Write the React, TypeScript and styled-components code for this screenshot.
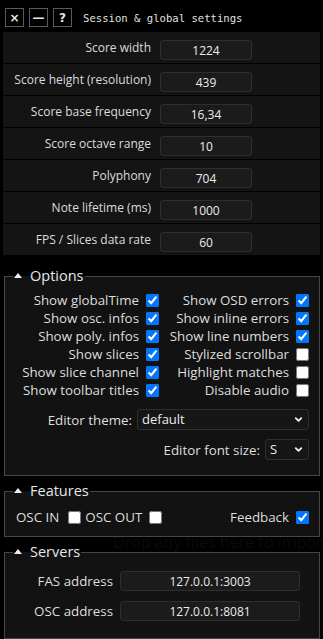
import React from 'react';
import styled, { createGlobalStyle } from 'styled-components';
import { ChevronDown } from 'lucide-react';

const GlobalStyle = createGlobalStyle`
  html, body {
    margin: 0;
    padding: 0;
    background: #000;
  }
  body {
    font-family: "Open Sans", "Noto Sans", sans-serif;
    color: #dedede;
  }
`;

const Page = styled.div`
  position: relative;
  width: 323px;
  height: 639px;
  overflow: hidden;
  background: #000;
`;

// faint drop-zone hint that sits behind the panels
const DropHint = styled.div`
  position: absolute;
  left: 113px;
  top: 531px;
  font-size: 16px;
  line-height: 22px;
  color: #0b0b0b;
  white-space: nowrap;
  z-index: 0;
`;

const Content = styled.div`
  position: relative;
  z-index: 1;
`;

const TitleBar = styled.div`
  height: 32px;
  display: flex;
  align-items: center;
  padding-left: 5px;
  gap: 5px;
  box-sizing: border-box;
  padding-top: 3px;
`;

const WinButton = styled.div`
  width: 17px;
  height: 17px;
  border: 1px solid #5a5a5a;
  color: #e8e8e8;
  display: flex;
  align-items: center;
  justify-content: center;
  font-family: "DejaVu Sans", sans-serif;
  font-weight: bold;
  font-size: 12px;
  line-height: 1;
`;

const Title = styled.span`
  margin-left: 6px;
  font-family: "DejaVu Sans Mono", monospace;
  font-size: 10.6px;
  color: #e0e0e0;
`;

const Rows = styled.div`
  display: flex;
  flex-direction: column;
  gap: 1px;
  margin: 0 3px 0 3px;
`;

const Row = styled.div`
  height: 31px;
  background: #141414;
  display: grid;
  grid-template-columns: 148px 92px;
  column-gap: 9px;
  align-items: center;
`;

const RowLabel = styled.label`
  text-align: right;
  font-size: 12px;
  color: #dcdcdc;
`;

const TextBox = styled.div<{ $w?: number }>`
  width: ${(p) => p.$w ?? 92}px;
  height: 20px;
  box-sizing: border-box;
  border: 1px solid #2e2e2e;
  border-radius: 3px;
  background: #1b1b1b;
  color: #ececec;
  font-size: 12px;
  display: flex;
  align-items: center;
  justify-content: center;
`;

const RowBox = styled(TextBox)`
  margin-top: 5px;
`;

const Group = styled.fieldset<{ $top: number; $pt: number; $pb: number }>`
  margin: ${(p) => p.$top}px 3px 0 4px;
  padding: ${(p) => p.$pt}px 10px ${(p) => p.$pb}px 8px;
  border: 1px solid #464646;
  background: #121212;
  min-width: 0;
`;

const Legend = styled.legend`
  padding: 0 1px;
  font-size: 14.5px;
  line-height: 20px;
  color: #e6e6e6;
  display: flex;
  align-items: center;
`;

const Caret = styled.span`
  width: 0;
  height: 0;
  border-left: 4px solid transparent;
  border-right: 4px solid transparent;
  border-bottom: 5px solid #eee;
  margin: 0 8px 1px 0;
`;

const OptionsGrid = styled.div`
  display: grid;
  grid-template-columns: 146px 150px;
  grid-auto-rows: 18px;
`;

const Option = styled.label`
  display: flex;
  align-items: center;
  justify-content: flex-end;
  gap: 7px;
  font-size: 13.33px;
  color: #dedede;
  white-space: nowrap;
`;

const Check = styled.input.attrs({ type: 'checkbox' })`
  margin: 0;
  width: 13px;
  height: 13px;
  flex: none;
`;

const SelectLine = styled.label<{ $mt: number }>`
  display: flex;
  justify-content: flex-end;
  align-items: center;
  gap: 5px;
  margin-top: ${(p) => p.$mt}px;
  font-size: 13.33px;
  color: #dedede;
`;

const SelectWrap = styled.div<{ $w: number }>`
  position: relative;
  width: ${(p) => p.$w}px;
  height: 21px;
`;

const Select = styled.select`
  appearance: none;
  width: 100%;
  height: 100%;
  box-sizing: border-box;
  background: #161616;
  border: 1px solid #2f2f2f;
  border-radius: 3px;
  color: #ececec;
  font-family: "Open Sans", sans-serif;
  font-size: 13px;
  padding: 0 0 1px 4px;
  outline: none;
`;

const SelectArrow = styled(ChevronDown)`
  position: absolute;
  right: 5px;
  top: 5px;
  pointer-events: none;
  color: #f0f0f0;
`;

const FeatureRow = styled.div`
  display: flex;
  align-items: center;
  height: 18px;
  padding-left: 3px;
  font-size: 13.33px;
  color: #dedede;
`;

const Inline = styled.label<{ $gap: number }>`
  display: flex;
  align-items: center;
  gap: ${(p) => p.$gap}px;
  margin-right: 4px;
`;

const Spacer = styled.div`
  flex: 1;
`;

const ServerList = styled.div`
  display: flex;
  flex-direction: column;
  gap: 10px;
`;

const ServerRow = styled.div`
  display: grid;
  grid-template-columns: 100px 180px;
  column-gap: 7px;
  align-items: center;
`;

const ServerLabel = styled.label`
  text-align: right;
  font-size: 13.33px;
  color: #dedede;
`;

const scoreRows: [string, string][] = [
  ['Score width', '1224'],
  ['Score height (resolution)', '439'],
  ['Score base frequency', '16,34'],
  ['Score octave range', '10'],
  ['Polyphony', '704'],
  ['Note lifetime (ms)', '1000'],
  ['FPS / Slices data rate', '60'],
];

const options: [string, boolean][] = [
  ['Show globalTime', true],
  ['Show OSD errors', true],
  ['Show osc. infos', true],
  ['Show inline errors', true],
  ['Show poly. infos', true],
  ['Show line numbers', true],
  ['Show slices', true],
  ['Stylized scrollbar', false],
  ['Show slice channel', true],
  ['Highlight matches', false],
  ['Show toolbar titles', true],
  ['Disable audio', false],
];

const App = () => {
  return (
    <Page>
      <GlobalStyle />
      <DropHint>Drop any files here to import</DropHint>
      <Content>
        <TitleBar>
          <WinButton>×</WinButton>
          <WinButton>—</WinButton>
          <WinButton>?</WinButton>
          <Title>Session &amp; global settings</Title>
        </TitleBar>

        <Rows>
          {scoreRows.map(([label, value]) => (
            <Row key={label}>
              <RowLabel>{label}</RowLabel>
              <RowBox>{value}</RowBox>
            </Row>
          ))}
        </Rows>

        <Group $top={11} $pt={5} $pb={15}>
          <Legend>
            <Caret />
            Options
          </Legend>
          <OptionsGrid>
            {options.map(([label, checked]) => (
              <Option key={label}>
                {label}
                <Check defaultChecked={checked} />
              </Option>
            ))}
          </OptionsGrid>
          <SelectLine $mt={10}>
            Editor theme:
            <SelectWrap $w={172}>
              <Select defaultValue="default">
                <option value="default">default</option>
              </Select>
              <SelectArrow size={11} strokeWidth={4} />
            </SelectWrap>
          </SelectLine>
          <SelectLine $mt={9}>
            Editor font size:
            <SelectWrap $w={44}>
              <Select defaultValue="S">
                <option value="S">S</option>
              </Select>
              <SelectArrow size={11} strokeWidth={4} />
            </SelectWrap>
          </SelectLine>
        </Group>

        <Group $top={5} $pt={7} $pb={10}>
          <Legend>
            <Caret />
            Features
          </Legend>
          <FeatureRow>
            <Inline $gap={9}>
              OSC IN
              <Check />
            </Inline>
            <Inline $gap={7}>
              OSC OUT
              <Check />
            </Inline>
            <Spacer />
            <Option>
              Feedback
              <Check defaultChecked />
            </Option>
          </FeatureRow>
        </Group>

        <Group $top={5} $pt={9} $pb={17}>
          <Legend>
            <Caret />
            Servers
          </Legend>
          <ServerList>
            <ServerRow>
              <ServerLabel>FAS address</ServerLabel>
              <TextBox $w={180}>127.0.0.1:3003</TextBox>
            </ServerRow>
            <ServerRow>
              <ServerLabel>OSC address</ServerLabel>
              <TextBox $w={180}>127.0.0.1:8081</TextBox>
            </ServerRow>
          </ServerList>
        </Group>
      </Content>
    </Page>
  );
};

export default App;
